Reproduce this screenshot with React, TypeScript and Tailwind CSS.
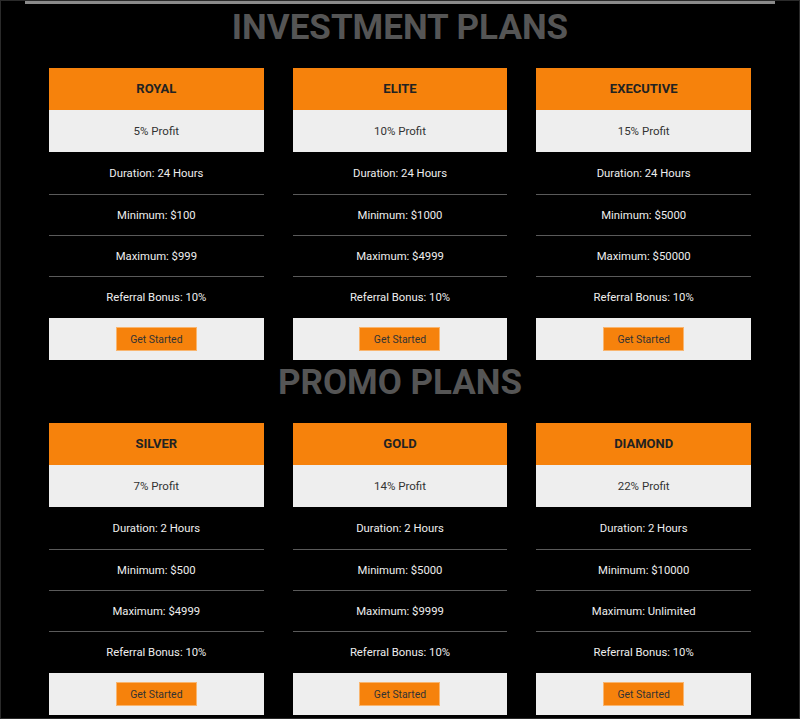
import React from 'react';

type Plan = {
  name: string;
  profit: string;
  duration: string;
  min: string;
  max: string;
  bonus: string;
};

const INVESTMENT: Plan[] = [
  { name: 'ROYAL', profit: '5% Profit', duration: '24 Hours', min: '$100', max: '$999', bonus: '10%' },
  { name: 'ELITE', profit: '10% Profit', duration: '24 Hours', min: '$1000', max: '$4999', bonus: '10%' },
  { name: 'EXECUTIVE', profit: '15% Profit', duration: '24 Hours', min: '$5000', max: '$50000', bonus: '10%' },
];

const PROMO: Plan[] = [
  { name: 'SILVER', profit: '7% Profit', duration: '2 Hours', min: '$500', max: '$4999', bonus: '10%' },
  { name: 'GOLD', profit: '14% Profit', duration: '2 Hours', min: '$5000', max: '$9999', bonus: '10%' },
  { name: 'DIAMOND', profit: '22% Profit', duration: '2 Hours', min: '$10000', max: 'Unlimited', bonus: '10%' },
];

const PlanCard = ({ plan }: { plan: Plan }) => (
  <div className="flex flex-col text-center">
    <div className="h-[42px] flex items-center justify-center bg-[#f6820c] text-[13px] font-bold text-[#222]">
      {plan.name}
    </div>
    <div className="h-[42px] pt-[2px] flex items-center justify-center bg-[#eeeeee] text-[11.5px] text-[#333]">
      {plan.profit}
    </div>
    <div className="h-[43px] pt-[2px] flex items-center justify-center border-b border-[#5a5a5a] text-[11.3px] text-[#eee]">
      Duration: {plan.duration}
    </div>
    <div className="h-[41px] pt-[2px] flex items-center justify-center border-b border-[#5a5a5a] text-[11.3px] text-[#eee]">
      Minimum: {plan.min}
    </div>
    <div className="h-[41px] pt-[2px] flex items-center justify-center border-b border-[#5a5a5a] text-[11.3px] text-[#eee]">
      Maximum: {plan.max}
    </div>
    <div className="h-[41px] pt-[2px] flex items-center justify-center text-[11.3px] text-[#eee]">
      Referral Bonus: {plan.bonus}
    </div>
    <div className="h-[42px] flex items-center justify-center bg-[#eeeeee]">
      <button className="w-[81px] h-[24px] pt-[2px] bg-[#f6820c] border border-[#f9b56e] text-[10.4px] text-[#333]">
        Get Started
      </button>
    </div>
  </div>
);

export default function App() {
  return (
    <div className="w-[800px] h-[719px] overflow-hidden bg-black border border-[#2a2a2a] font-['Roboto',sans-serif]">
      <div className="mx-[24px] h-[3px] bg-[#8a8a8a]" />
      {/* Investment plans */}
      <h1 className="mt-[3px] mb-[19px] text-center text-[35px] leading-[42px] font-bold text-[#555]">
        INVESTMENT PLANS
      </h1>
      <div className="grid grid-cols-3 gap-x-[29px] px-[48px]">
        {INVESTMENT.map((p) => (
          <PlanCard key={p.name} plan={p} />
        ))}
      </div>
      {/* Promo plans */}
      <h1 className="mt-[2px] mb-[19px] text-center text-[35px] leading-[42px] font-bold text-[#555]">
        PROMO PLANS
      </h1>
      <div className="grid grid-cols-3 gap-x-[29px] px-[48px]">
        {PROMO.map((p) => (
          <PlanCard key={p.name} plan={p} />
        ))}
      </div>
    </div>
  );
}
